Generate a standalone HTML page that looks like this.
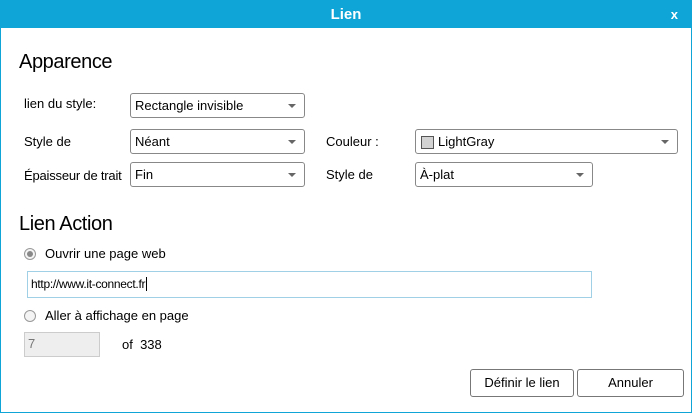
<!DOCTYPE html><html><head><style>
body{margin:0;width:692px;height:413px;overflow:hidden;font-family:"Liberation Sans",sans-serif;font-size:13px;color:#000;background:#fff;position:relative}
.win{position:absolute;left:0;top:0;width:690px;height:411px;border:1px solid #0fa5d7;background:#fff}
.tb{position:absolute;left:0;top:0;width:692px;height:28px;background:#0fa5d7;color:#fff;font-weight:bold;font-size:15px;text-align:center;line-height:30px}
.x{position:absolute;right:14px;top:0;font-size:13px;font-weight:bold}
.a{position:absolute;white-space:nowrap}
.h{font-size:20px;letter-spacing:-0.4px}
.dd{position:absolute;border:1px solid #888;border-radius:3px;background:#fff;box-sizing:border-box;padding-left:4px;line-height:23px;z-index:2}
.dd:after{content:"";position:absolute;right:8px;top:10px;border:4px solid transparent;border-top:4px solid #666;border-bottom:0}
.btn{position:absolute;border:1px solid #777;border-radius:3px;background:#fff;box-sizing:border-box;text-align:center;line-height:26px}
.rad{position:absolute;width:10px;height:10px;border:1px solid #999;border-radius:50%;background:#f4f4f4}
</style></head><body>
<div class="win"></div>
<div class="tb">Lien<span class="x">x</span></div>
<div class="a h" style="left:19px;top:51px">Apparence</div>
<div class="a" style="left:24px;top:96px">lien du style:</div>
<div class="dd" style="left:130px;top:93px;width:175px;height:25px">Rectangle invisible</div>
<div class="a" style="left:24px;top:134px">Style de</div>
<div class="dd" style="left:130px;top:129px;width:175px;height:25px">Néant</div>
<div class="a" style="left:326px;top:134px">Couleur :</div>
<div class="dd" style="left:415px;top:129px;width:263px;height:25px;padding-left:22px"><span style="position:absolute;left:5px;top:6px;width:11px;height:11px;background:#d3d3d3;border:1px solid #555"></span>LightGray</div>
<div class="a" style="left:24px;top:168px;width:106px;overflow:hidden;letter-spacing:-0.2px">Épaisseur de trait</div>
<div class="dd" style="left:130px;top:162px;width:175px;height:25px">Fin</div>
<div class="a" style="left:326px;top:167px">Style de</div>
<div class="dd" style="left:415px;top:162px;width:178px;height:25px">À-plat</div>
<div class="a h" style="left:19px;top:213px">Lien Action</div>
<div class="rad" style="left:24px;top:248px"><span style="position:absolute;left:2px;top:2px;width:6px;height:6px;border-radius:50%;background:#888"></span></div>
<div class="a" style="left:45px;top:246px">Ouvrir une page web</div>
<div class="a" style="left:27px;top:271px;width:560px;height:25px;border:1px solid #9fd0e6;font-size:12px;line-height:24px;padding-left:3px;box-sizing:content-box;letter-spacing:-0.3px">http://www.it-connect.fr<span style="border-left:1px solid #000;margin-left:1px"></span></div>
<div class="rad" style="left:24px;top:310px"></div>
<div class="a" style="left:45px;top:308px">Aller à affichage en page</div>
<div class="a" style="left:24px;top:332px;width:76px;height:25px;border:1px solid #ccc;background:#eee;color:#777;padding-left:3px;line-height:22px;box-sizing:border-box">7</div>
<div class="a" style="left:122px;top:337px">of &nbsp;338</div>
<div class="btn" style="left:470px;top:369px;width:104px;height:28px">Définir le lien</div>
<div class="btn" style="left:577px;top:369px;width:107px;height:28px">Annuler</div>
</body></html>
